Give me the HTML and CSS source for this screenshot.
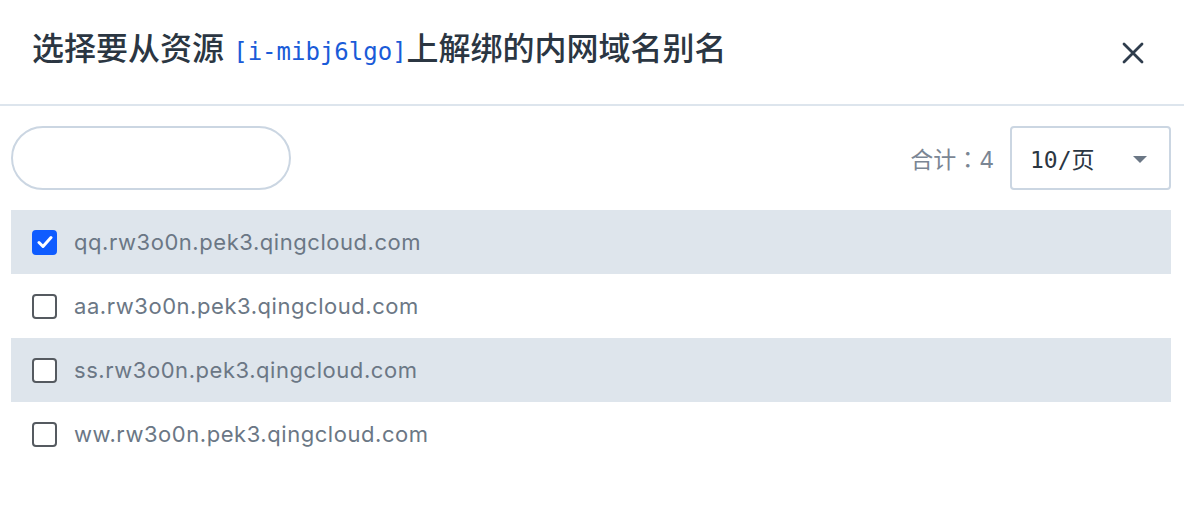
FILE: index.html
```html
<!DOCTYPE html>
<html lang="zh-CN">
<head>
<meta charset="utf-8">
<title>解绑内网域名别名</title>
<link rel="stylesheet" href="styles.css">
</head>
<body>
<div class="dialog">
  <div class="dialog-header">
    <h2 class="dialog-title">选择要从资源 <span class="res-id">[i-mibj6lgo]</span>上解绑的内网域名别名</h2>
    <button class="close-btn" aria-label="关闭">
      <svg width="22" height="22" viewBox="0 0 22 22"><path d="M2 2 L20 20 M20 2 L2 20" stroke="#2f3d4d" stroke-width="2.8" stroke-linecap="round" fill="none"/></svg>
    </button>
  </div>
  <div class="dialog-body">
    <div class="toolbar">
      <input class="search" type="text">
      <div class="toolbar-right">
        <span class="total" lang="zh-Hant">合计：4</span>
        <div class="page-size">
          <span class="page-size-text">10/页</span>
          <span class="caret"></span>
        </div>
      </div>
    </div>
    <ul class="list">
      <li class="row striped"><span class="cb checked"><svg width="16" height="14" viewBox="0 0 16 14"><path d="M2 7.5 L6 11.5 L14 2.5" stroke="#fff" stroke-width="3" fill="none" stroke-linecap="round" stroke-linejoin="round"/></svg></span><span class="name">qq.rw3o0n.pek3.qingcloud.com</span></li>
      <li class="row"><span class="cb"></span><span class="name">aa.rw3o0n.pek3.qingcloud.com</span></li>
      <li class="row striped"><span class="cb"></span><span class="name">ss.rw3o0n.pek3.qingcloud.com</span></li>
      <li class="row"><span class="cb"></span><span class="name">ww.rw3o0n.pek3.qingcloud.com</span></li>
    </ul>
  </div>
</div>
</body>
</html>
```
FILE: styles.css
```css
html, body {
  margin: 0;
  padding: 0;
  background: #fff;
}
body {
  font-family: Inter, "Noto Sans CJK SC", sans-serif;
}
.dialog {
  width: 1184px;
}
.dialog-header {
  height: 104px;
  border-bottom: 2px solid #dde5ed;
  display: flex;
  align-items: center;
  justify-content: space-between;
  padding: 0 40px 0 32px;
  box-sizing: content-box;
}
.dialog-title {
  margin: 0;
  font-family: "Noto Sans CJK SC", sans-serif;
  font-size: 32px;
  font-weight: 500;
  color: #2b3642;
  line-height: 40px;
  padding-bottom: 6px;
}
.res-id {
  font-family: "DejaVu Sans Mono", monospace;
  font-size: 24px;
  font-weight: 400;
  color: #1a5bd8;
  margin-left: 2px;
}
.close-btn {
  border: 0;
  background: none;
  padding: 0;
  width: 22px;
  height: 22px;
  display: flex;
  cursor: pointer;
  margin-top: 2px;
}
.dialog-body {
  padding: 20px 13px 0 11px;
}
.toolbar {
  display: flex;
  align-items: center;
  justify-content: space-between;
  height: 64px;
  margin-bottom: 20px;
}
.search {
  width: 280px;
  height: 64px;
  box-sizing: border-box;
  border: 2px solid #cbd6e2;
  border-radius: 32px;
  outline: none;
  margin: 0;
  padding: 0 20px;
}
.toolbar-right {
  display: flex;
  align-items: center;
  gap: 16px;
}
.total {
  font-family: Inter, "Noto Sans CJK TC", sans-serif;
  font-size: 23px;
  color: #7b8694;
}
.page-size {
  width: 161px;
  height: 64px;
  box-sizing: border-box;
  border: 2px solid #cbd6e2;
  border-radius: 4px;
  display: flex;
  align-items: center;
  justify-content: space-between;
  padding: 0 22px 0 18px;
}
.page-size-text {
  font-family: "DejaVu Sans Mono", "Noto Sans CJK SC", monospace;
  font-size: 23px;
  color: #2b3642;
}
.caret {
  width: 0;
  height: 0;
  border-left: 7px solid transparent;
  border-right: 7px solid transparent;
  border-top: 7px solid #6b7785;
  margin-top: 2px;
}
.list {
  list-style: none;
  margin: 0;
  padding: 0;
}
.row {
  height: 64px;
  display: flex;
  align-items: center;
  padding-left: 21px;
}
.row.striped {
  background: #dee5ec;
}
.cb {
  width: 25px;
  height: 25px;
  box-sizing: border-box;
  border: 2px solid #555a60;
  border-radius: 4px;
  background: #fff;
  display: flex;
  align-items: center;
  justify-content: center;
  margin-right: 17px;
}
.cb.checked {
  background: #0f5cff;
  border-color: #0f5cff;
}
.name {
  font-size: 22px;
  letter-spacing: 0.55px;
  color: #6b7785;
}
```
